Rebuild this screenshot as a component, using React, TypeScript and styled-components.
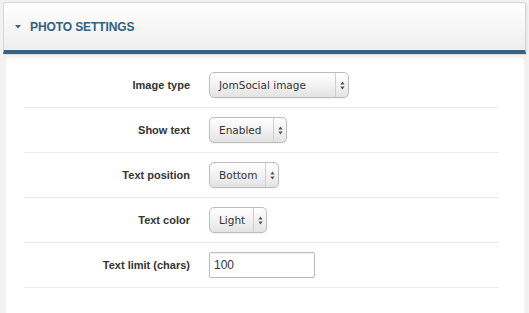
import React from "react";
import styled, { createGlobalStyle } from "styled-components";

const GlobalStyle = createGlobalStyle`
  html, body {
    margin: 0;
    padding: 0;
    background: #f2f2f2;
  }
  body {
    font-family: "Liberation Sans", Arial, sans-serif;
    color: #333;
  }
`;

const Page = styled.div`
  width: 529px;
  height: 313px;
  overflow: hidden;
  padding: 2px 3px 0 3px;
  box-sizing: border-box;
`;

const Header = styled.div`
  height: 52px;
  box-sizing: border-box;
  display: flex;
  align-items: center;
  gap: 9px;
  padding: 0 0 0 11px;
  border: 1px solid #d6d6d6;
  border-bottom: 4px solid #3b6181;
  border-radius: 3px 3px 0 0;
  background: linear-gradient(#ffffff, #eeeeee);
  box-shadow: 1px 1px 1px rgba(0, 0, 0, 0.08);
`;

const Caret = styled.svg`
  width: 6px;
  height: 4px;
  flex: none;
`;

const Title = styled.h3`
  margin: 0;
  font-size: 12px;
  font-weight: bold;
  text-transform: uppercase;
  color: #34607f;
  letter-spacing: -0.1px;
`;

const Panel = styled.div`
  margin: 4px 2px 0 3px;
  background: #fff;
  border-radius: 4px 4px 0 0;
  padding: 5px 25px 30px 18px;
  height: 260px;
  box-sizing: border-box;
`;

const Row = styled.div`
  display: grid;
  grid-template-columns: 166px auto;
  column-gap: 19px;
  align-items: center;
  padding: 9px 0;
  border-bottom: 1px solid #ebebeb;
`;

const Label = styled.label`
  text-align: right;
  font-size: 11px;
  font-weight: bold;
  color: #333;
`;

const SelectBox = styled.div<{ $width: number }>`
  display: flex;
  width: ${(p) => p.$width}px;
  height: 26px;
  box-sizing: border-box;
  border: 1px solid #bcbcbc;
  border-radius: 5px;
  background: linear-gradient(#ffffff, #f4f4f4 45%, #e3e3e3);
  box-shadow: inset 0 1px 0 #fff, 0 1px 0 rgba(0, 0, 0, 0.04);
`;

const SelectValue = styled.span`
  flex: 1;
  display: flex;
  align-items: center;
  padding-left: 9px;
  font-family: "DejaVu Sans", "Liberation Sans", sans-serif;
  font-size: 10.5px;
  color: #333;
  white-space: nowrap;
`;

const SelectArrows = styled.span`
  width: 12px;
  flex: none;
  display: flex;
  align-items: center;
  justify-content: center;
  border-left: 1px solid #cfcfcf;
`;

const TextInput = styled.input`
  width: 106px;
  height: 26px;
  box-sizing: border-box;
  border: 1px solid #bbb;
  border-radius: 2px;
  padding: 0 4px;
  font-family: "Liberation Sans", Arial, sans-serif;
  font-size: 12px;
  color: #333;
  outline: none;
  box-shadow: inset 0 1px 1px rgba(0, 0, 0, 0.06);
`;

function Arrows() {
  return (
    <svg width="5" height="9" viewBox="0 0 5 9">
      <path d="M2.5 0.5 L4.6 3.4 L0.4 3.4 Z" fill="#555" />
      <path d="M2.5 8.5 L4.6 5.6 L0.4 5.6 Z" fill="#555" />
    </svg>
  );
}

function Select({ value, width }: { value: string; width: number }) {
  return (
    <SelectBox $width={width}>
      <SelectValue>{value}</SelectValue>
      <SelectArrows>
        <Arrows />
      </SelectArrows>
    </SelectBox>
  );
}

const selects = [
  { label: "Image type", value: "JomSocial image", width: 140 },
  { label: "Show text", value: "Enabled", width: 78 },
  { label: "Text position", value: "Bottom", width: 70 },
  { label: "Text color", value: "Light", width: 58 },
];

export default function App() {
  return (
    <>
      <GlobalStyle />
      <Page>
        <Header>
          <Caret viewBox="0 0 6 4">
            <path d="M0 0 L6 0 L3 3.5 Z" fill="#34607f" />
          </Caret>
          <Title>Photo Settings</Title>
        </Header>
        <Panel>
          {selects.map((s) => (
            <Row key={s.label}>
              <Label>{s.label}</Label>
              <Select value={s.value} width={s.width} />
            </Row>
          ))}
          <Row>
            <Label>Text limit (chars)</Label>
            <TextInput defaultValue="100" />
          </Row>
        </Panel>
      </Page>
    </>
  );
}
